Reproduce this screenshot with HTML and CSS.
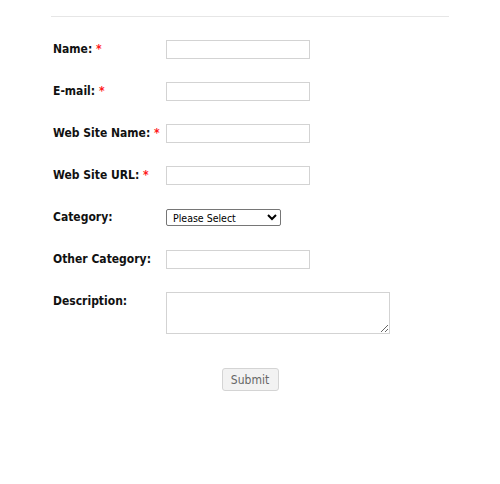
FILE: index.html
```html
<!DOCTYPE html>
<html>
<head>
<meta charset="utf-8">
<link rel="stylesheet" href="styles.css">
</head>
<body>
<div class="wrap">
  <form class="form">
    <div class="row">
      <label class="label">Name: <span class="req">*</span></label>
      <input class="field" type="text">
    </div>
    <div class="row">
      <label class="label">E-mail: <span class="req">*</span></label>
      <input class="field" type="text">
    </div>
    <div class="row">
      <label class="label">Web Site Name: <span class="req">*</span></label>
      <input class="field" type="text">
    </div>
    <div class="row">
      <label class="label">Web Site URL: <span class="req">*</span></label>
      <input class="field" type="text">
    </div>
    <div class="row">
      <label class="label">Category:</label>
      <select class="select"><option>Please Select</option></select>
    </div>
    <div class="row">
      <label class="label">Other Category:</label>
      <input class="field" type="text">
    </div>
    <div class="row row-area">
      <label class="label">Description:</label>
      <textarea class="area"></textarea>
    </div>
    <div class="actions">
      <button class="submit" type="button">Submit</button>
    </div>
  </form>
</div>
</body>
</html>
```
FILE: styles.css
```css
html, body {
  margin: 0;
  padding: 0;
  background: #fff;
}
body {
  font-family: "DejaVu Sans Condensed", "DejaVu Sans", sans-serif;
  font-size: 12px;
  color: #000;
}
.wrap {
  width: 398px;
  margin: 0 auto;
  padding-top: 16px;
}
.form {
  border-top: 1px solid #e6e6e6;
  padding-top: 23px;
  margin: 0;
}
.row {
  display: flex;
  align-items: flex-start;
  height: 42px;
}
.row-area {
  height: 76px;
}
.label {
  width: 115px;
  padding-left: 2px;
  padding-top: 0;
  box-sizing: border-box;
  font-weight: bold;
  line-height: 19px;
  flex: none;
  color: #111;
}
.req {
  color: #ff1a1a;
}
.field {
  box-sizing: border-box;
  width: 144px;
  height: 19px;
  margin: 0;
  padding: 0 3px;
  border: 1px solid #d3d3d3;
  background: #fff;
  font: 11px "DejaVu Sans Condensed", sans-serif;
}
.select {
  box-sizing: border-box;
  width: 115px;
  height: 17px;
  margin: 1px 0 0 0;
  padding: 0 2px;
  border: 1px solid #767676;
  border-radius: 2px;
  background: #fff;
  font: 10.5px "DejaVu Sans Condensed", sans-serif;
  color: #000;
}
.area {
  box-sizing: border-box;
  width: 224px;
  height: 42px;
  margin: 0;
  padding: 2px;
  border: 1px solid #d3d3d3;
  font: 11px "DejaVu Sans Condensed", sans-serif;
}
.actions {
  display: flex;
  justify-content: center;
}
.submit {
  box-sizing: border-box;
  width: 57px;
  height: 23px;
  margin: 0;
  padding: 0;
  border: 1px solid #d4d4d4;
  border-radius: 3px;
  background: #f2f2f2;
  color: #666;
  font: 12px "DejaVu Sans Condensed", sans-serif;
}
```
